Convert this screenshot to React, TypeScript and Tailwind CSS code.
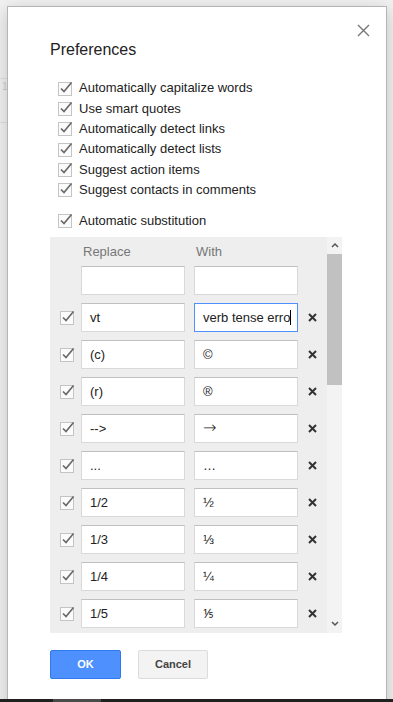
import React from 'react'

const FONT = { fontFamily: '"Liberation Sans", Arial, sans-serif' }

function Check() {
  return (
    <svg width="15" height="15" viewBox="0 0 15 15" className="shrink-0">
      <rect x="0.5" y="1.5" width="13" height="13" fill="#fbfbfb" stroke="#c4c4c4" />
      <path d="M3 7.5 L6 10.5 L13.5 1.5" fill="none" stroke="#6a6a6a" strokeWidth="1.7" />
    </svg>
  )
}

const options = [
  'Automatically capitalize words',
  'Use smart quotes',
  'Automatically detect links',
  'Automatically detect lists',
  'Suggest action items',
  'Suggest contacts in comments',
]

const rows: [string, React.ReactNode][] = [
  ['(c)', '©'],
  ['(r)', '®'],
  ['-->', <span className="text-[16px] font-light" style={{ fontFamily: '"DejaVu Sans", sans-serif' }}>→</span>],
  ['...', '…'],
  ['1/2', '½'],
  ['1/3', '⅓'],
  ['1/4', '¼'],
  ['1/5', '⅕'],
]

function Field({ value, focus }: { value?: React.ReactNode; focus?: boolean }) {
  return (
    <div
      className={`w-[104px] h-[29px] bg-white flex items-center pl-[8px] text-[13px] text-[#222] whitespace-nowrap overflow-hidden border ${
        focus ? 'border-[#4d90fe]' : 'border-[#d9d9d9] border-t-[#c0c0c0]'
      }`}
    >
      {value}
      {focus && <span className="inline-block w-px h-[15px] bg-black" />}
    </div>
  )
}

function Remove() {
  return (
    <svg width="9" height="9" viewBox="0 0 9 9" className="ml-[10px]">
      <path d="M1 1 L8 8 M8 1 L1 8" stroke="#333" strokeWidth="2" />
    </svg>
  )
}

export default function App() {
  return (
    <div className="relative w-[393px] h-[702px] bg-[#f1f1f1] overflow-hidden" style={FONT}>
      {/* page behind the dialog */}
      <div className="absolute left-0 top-[78px] w-[7px] h-px bg-[#e0e0e0]" />
      <div className="absolute left-0 top-[122px] w-[7px] h-px bg-[#e0e0e0]" />
      <div className="absolute left-[2px] top-[79px] text-[10px] text-[#ccc]">1</div>

      {/* dialog */}
      <div className="absolute left-[7px] top-[6px] w-[380px] h-[710px] bg-white border border-[#b5b5b5] shadow-[0_4px_16px_rgba(0,0,0,0.2)]">
        <svg width="13" height="13" viewBox="0 0 13 13" className="absolute left-[349px] top-[17px]">
          <path d="M1 1 L12 12 M12 1 L1 12" stroke="#777" strokeWidth="1.4" />
        </svg>

        <div className="pl-[42px] pt-[33px]">
          <h1 className="text-[16px] leading-[20px] text-[#222]">Preferences</h1>

          <div className="mt-[18px]">
            {options.map((o) => (
              <div key={o} className="flex items-center h-[20.3px] pl-[8px] gap-[6px] text-[13px] text-[#222]">
                <Check />
                <span>{o}</span>
              </div>
            ))}
          </div>

          <div className="mt-[11px] flex items-center h-[20px] pl-[8px] gap-[6px] text-[13px] text-[#222]">
            <Check />
            <span>Automatic substitution</span>
          </div>

          <div className="mt-[6px] w-[292px] h-[396px] bg-[#eeeeee] flex overflow-hidden">
            <div className="w-[277px]">
              <div className="flex h-[20px] mt-[5px] text-[13px] text-[#777] leading-[20px]">
                <span className="ml-[33px] w-[113px]">Replace</span>
                <span>With</span>
              </div>
              <div className="flex flex-col gap-[8px] mt-[4px]">
                <div className="flex items-center pl-[31px] gap-[9px]">
                  <Field />
                  <Field />
                </div>
                <div className="flex items-center pl-[10px]">
                  <div className="w-[21px]"><Check /></div>
                  <Field value="vt" />
                  <div className="w-[9px]" />
                  <Field value="verb tense erro" focus />
                  <Remove />
                </div>
                {rows.map(([a, b]) => (
                  <div key={a} className="flex items-center pl-[10px]">
                    <div className="w-[21px]"><Check /></div>
                    <Field value={a} />
                    <div className="w-[9px]" />
                    <Field value={b} />
                    <Remove />
                  </div>
                ))}
              </div>
            </div>

            {/* scrollbar */}
            <div className="w-[15px] h-full bg-[#f3f3f3] flex flex-col">
              <div className="h-[17px] flex items-center justify-center">
                <svg width="8" height="6" viewBox="0 0 8 6">
                  <path d="M1 5 L4 2 L7 5" fill="none" stroke="#555" strokeWidth="1.5" />
                </svg>
              </div>
              <div className="h-[131px] bg-[#c1c1c1]" />
              <div className="flex-1" />
              <div className="h-[17px] flex items-center justify-center">
                <svg width="8" height="6" viewBox="0 0 8 6">
                  <path d="M1 1 L4 4 L7 1" fill="none" stroke="#555" strokeWidth="1.5" />
                </svg>
              </div>
            </div>
          </div>

          <div className="mt-[17px] flex gap-[17px]">
            <button className="w-[71px] h-[29px] rounded-[2px] bg-[#4d90fe] border border-[#3079ed] text-white text-[11px] font-bold">
              OK
            </button>
            <button className="w-[70px] h-[29px] rounded-[2px] bg-[#f3f3f3] border border-[#dcdcdc] text-[#444] text-[11px] font-bold">
              Cancel
            </button>
          </div>
        </div>
      </div>

      {/* bottom bar */}
      <div className="absolute left-0 bottom-0 w-full h-[3px] bg-[#202020]">
        <div className="ml-[53px] w-[48px] h-full bg-[#4a4a4a]" />
      </div>
    </div>
  )
}
